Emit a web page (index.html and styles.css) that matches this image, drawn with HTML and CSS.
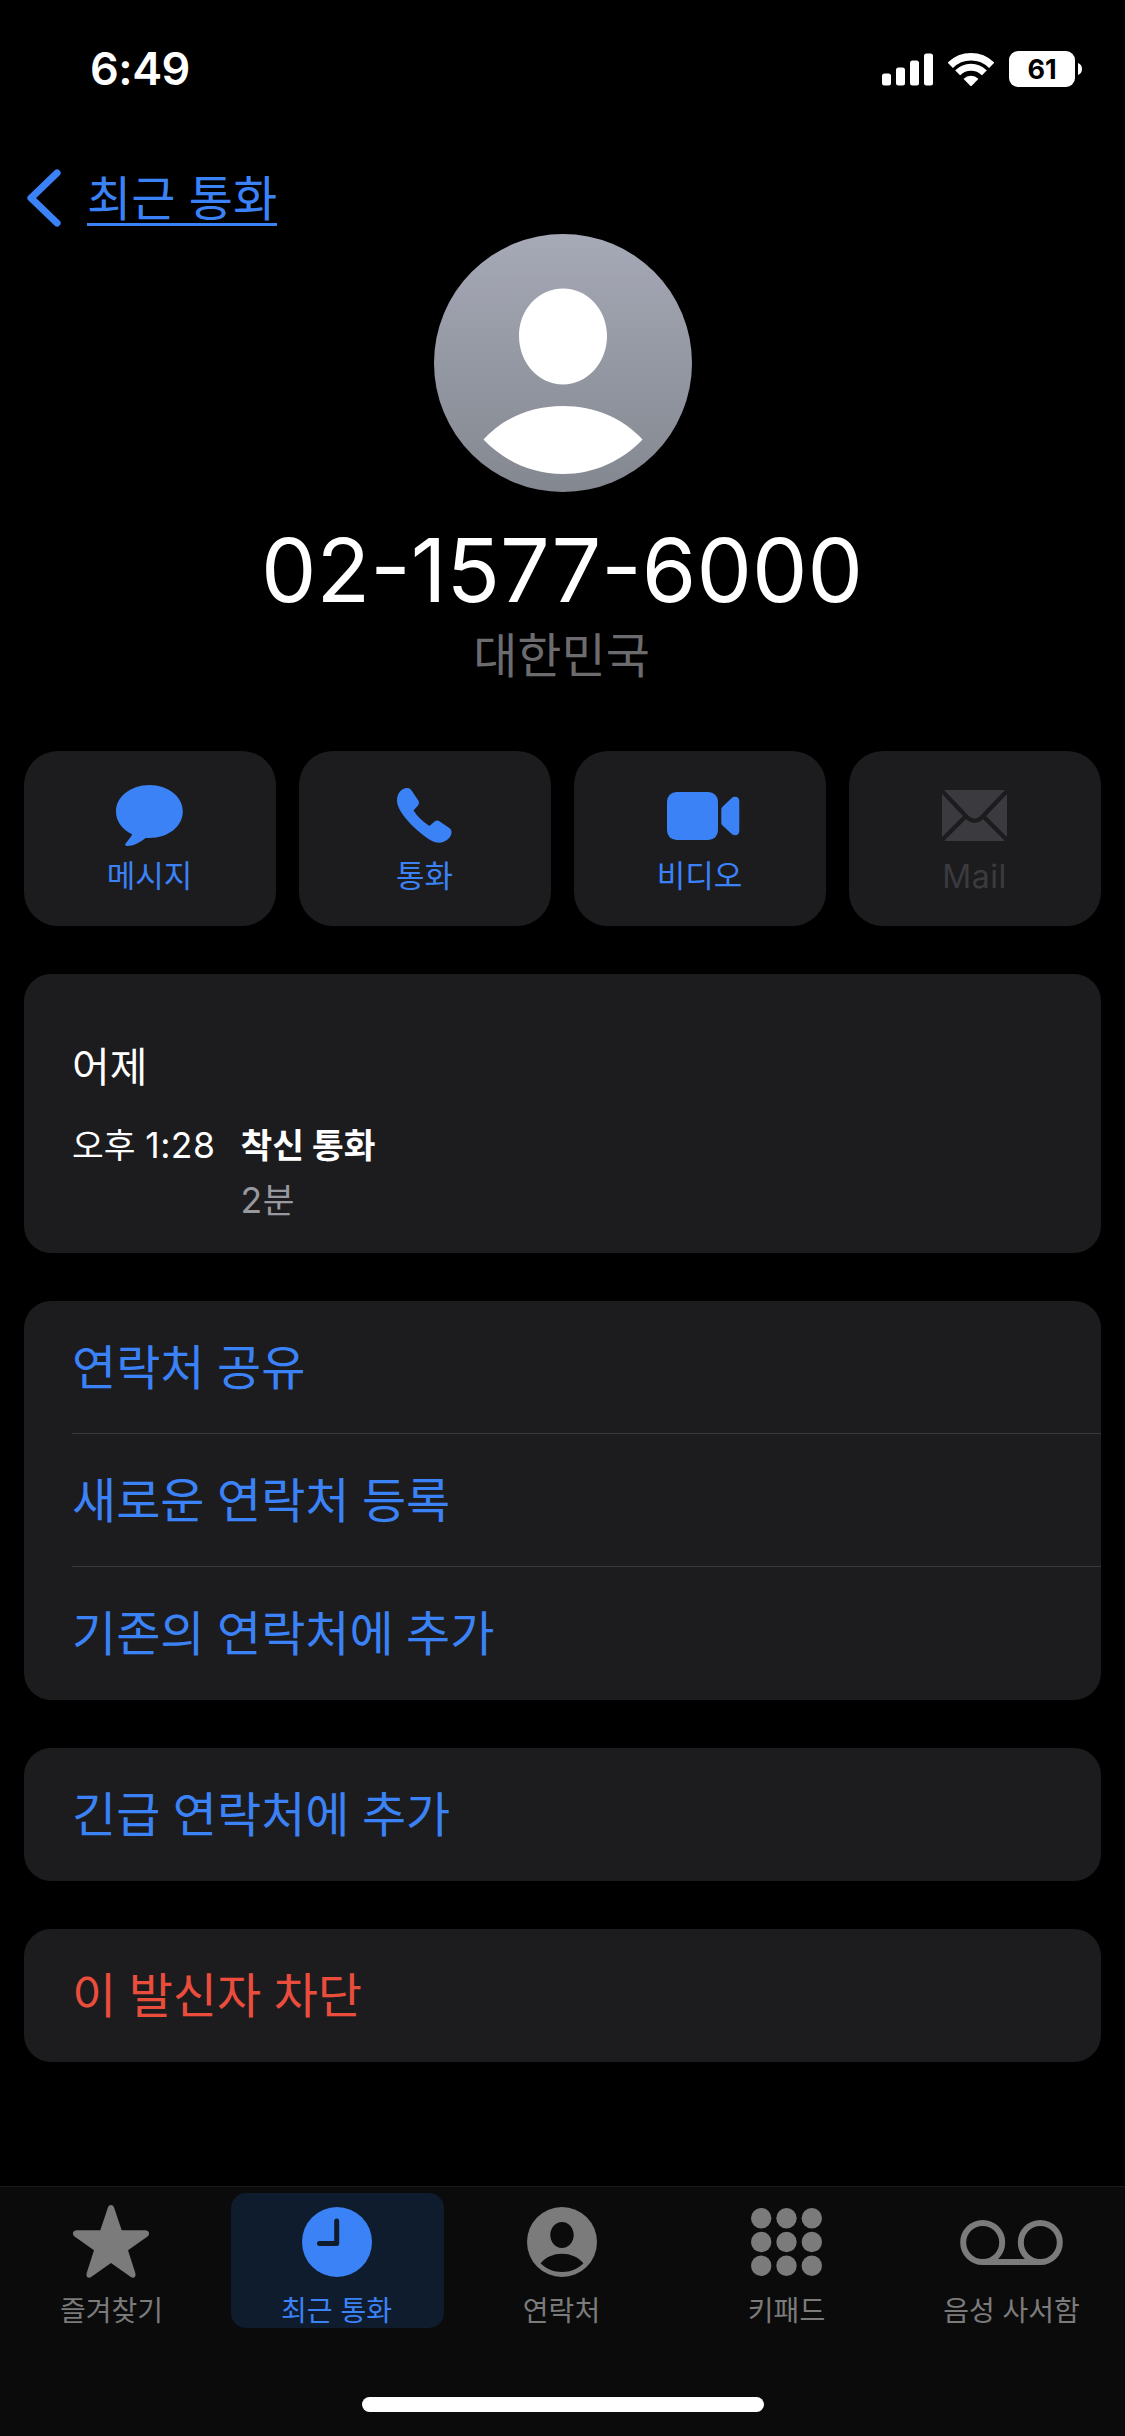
FILE: index.html
```html
<!DOCTYPE html>
<html lang="ko">
<head>
<meta charset="utf-8">
<title>최근 통화</title>
<link rel="stylesheet" href="styles.css">
</head>
<body>
<div class="screen">
  <header class="status">
    <span class="time">6:49</span>
    <div class="status-icons">
      <svg class="signal" width="52" height="33" viewBox="0 0 52 33"><rect x="0" y="20.5" width="9" height="12" rx="2.5"/><rect x="14" y="14.5" width="9" height="18" rx="2.5"/><rect x="28" y="7.5" width="9" height="25" rx="2.5"/><rect x="42" y="0.5" width="9" height="32" rx="2.5"/></svg>
      <svg class="wifi" width="46" height="33" viewBox="0 0 46 33"><defs><clipPath id="fan"><path d="M23 33.5L-1 9L9 -3H37L47 9Z"/></clipPath></defs><g clip-path="url(#fan)"><circle cx="23" cy="33" r="29.3" fill="none" stroke="#fff" stroke-width="7.4"/><circle cx="23" cy="33" r="18.7" fill="none" stroke="#fff" stroke-width="7"/><circle cx="23" cy="33" r="10.3" fill="#fff"/></g></svg>
      <div class="battery"><span class="level">61</span><svg class="nub" width="4" height="12" viewBox="0 0 4 12"><path d="M0 0Q4 1.5 4 6T0 12Z"/></svg></div>
    </div>
  </header>

  <nav class="back">
    <svg width="34" height="58" viewBox="0 0 34 58"><path d="M30 4L4 29L30 54" fill="none" stroke="currentColor" stroke-width="7.2" stroke-linecap="round" stroke-linejoin="round"/></svg>
    <a class="back-label">최근 통화</a>
  </nav>

  <section class="profile">
    <svg class="avatar" width="258" height="258" viewBox="0 0 258 258"><defs><linearGradient id="shade" x1="0" y1="0" x2="0" y2="1"><stop offset="0" stop-color="#a6a9b6"/><stop offset="1" stop-color="#838890"/></linearGradient></defs><circle cx="129" cy="129" r="129" fill="url(#shade)"/><path fill="#fff" d="M129 54.5C154 54.5 173 76 173 102C173 129 153 150.5 129 150.5S85 129 85 102C85 76 104 54.5 129 54.5ZM49.500 205.500C69 184 97 172 129 172S189 184 208.500 205.500C188 227 160 240 129 240S70 227 49.500 205.500Z"/></svg>
    <h1 class="number">02-1577-6000</h1>
    <p class="country">대한민국</p>
  </section>

  <section class="actions">
    <button class="action"><span class="glyph"><svg width="67" height="61" viewBox="0 0 67 61"><path d="M33.400 0C52 0 66.800 11.500 66.800 26.500S52 53 33.400 53H29.500C24 57.500 17 61 11.500 61C9.200 61 8.600 59.800 9.800 58.300C12.500 55 15 52.200 16.200 49.300C6.500 45 0 36.500 0 26.500C0 11.500 15 0 33.400 0Z"/></svg></span><span class="action-label">메시지</span></button>
    <button class="action"><span class="glyph"><svg width="55" height="55" viewBox="0 0 55 55"><path d="M9.700 0C11.700 0 13.300 .6 14.400 2.300L21.300 12.500C22.300 14.200 22.200 15.800 21.200 17.200L17.300 21.400C16.600 22.200 16.600 22.800 17.200 23.600C20.500 28.500 25.500 33.500 31 37.100C31.900 37.800 32.700 37.800 33.400 37.200L37.600 33.500C39 32.400 40.800 32.300 42.400 33.300L52 39.700C54 41.200 54.700 42.600 54.500 44.600C54.200 50 48.500 54.700 42 54.700C37 54.700 32 51.700 27 47.700C18 41 9 32 3.600 23.300C1.200 19.200 0 16 0 12.300C0 5 5 0 9.700 0Z"/></svg></span><span class="action-label">통화</span></button>
    <button class="action"><span class="glyph video"><svg width="73" height="48" viewBox="0 0 73 48"><rect width="51" height="48" rx="9.500"/><path d="M54.300 17.500Q54.300 15.800 55.500 14.700L64.500 6.200C67.500 3.500 72.300 4.500 72.300 9V39C72.300 43.500 67.500 44.500 64.500 41.800L55.500 33.500Q54.300 32.400 54.300 30.700Z"/></svg></span><span class="action-label">비디오</span></button>
    <button class="action off"><span class="glyph"><svg width="65" height="51" viewBox="0 0 65 51"><rect width="65" height="51" rx="4"/><path d="M0 1L26 28.200Q32.500 33.600 39 28.200L65 1M0 50L23.500 26.500M65 50L41.500 26.500" fill="none" stroke="#1c1c1e" stroke-width="4.300"/></svg></span><span class="action-label mail">Mail</span></button>
  </section>

  <section class="card history">
    <h2 class="day">어제</h2>
    <div class="call"><span class="when">오후 <span class="clock">1:28</span></span><div class="detail"><b class="kind">착신 통화</b><span class="length"><span class="clock">2</span>분</span></div></div>
  </section>

  <section class="card">
    <a class="row">연락처 공유</a>
    <a class="row">새로운 연락처 등록</a>
    <a class="row">기존의 연락처에 추가</a>
  </section>
  <section class="card"><a class="row">긴급 연락처에 추가</a></section>
  <section class="card"><a class="row danger">이 발신자 차단</a></section>

  <footer class="dock">
    <nav class="tabs">
      <a class="tab"><span class="tab-icon star"><svg width="76" height="73" viewBox="0 0 76 73"><path d="M34.600 3.500C35.600-1.100 40.400-1.100 41.400 3.500L48.700 25.300H72C76 25.300 77.500 29 74.500 31.500L55 45.300L62.300 68C63.300 72 60.700 74 57.500 71.700L38 58L18.500 71.700C15.300 74 12.700 72 13.700 68L21 45.300L1.500 31.500C-1.500 29 0 25.300 4 25.300H27.300Z"/></svg></span><span class="tab-label">즐겨찾기</span></a>
      <a class="tab active"><span class="tab-icon"><svg width="70" height="70" viewBox="0 0 70 70"><circle cx="35" cy="35" r="35"/><path d="M34.700 14V36.500H17.500" fill="none" stroke="#0f1c2d" stroke-width="5" stroke-linecap="round" stroke-linejoin="round"/></svg></span><span class="tab-label">최근 통화</span></a>
      <a class="tab"><span class="tab-icon"><svg width="70" height="70" viewBox="0 0 70 70"><path fill-rule="evenodd" d="M35 0A35 35 0 1 1 35 70A35 35 0 1 1 35 0ZM35 15C28.500 15 23.300 20.800 23.300 28S28.500 41 35 41S46.700 35.200 46.700 28S41.500 15 35 15ZM13.600 56.300C19 62 26.500 65 35 65S51 62 56.400 56.300C51.500 50 43.500 46.700 35 46.700S18.500 50 13.600 56.300Z"/></svg></span><span class="tab-label">연락처</span></a>
      <a class="tab"><span class="tab-icon"><svg width="71" height="68" viewBox="0 0 71 68"><circle cx="10.200" cy="10.200" r="10.200"/><circle cx="35.500" cy="10.200" r="10.200"/><circle cx="60.800" cy="10.200" r="10.200"/><circle cx="10.200" cy="34" r="10.200"/><circle cx="35.500" cy="34" r="10.200"/><circle cx="60.800" cy="34" r="10.200"/><circle cx="10.200" cy="57.800" r="10.200"/><circle cx="35.500" cy="57.800" r="10.200"/><circle cx="60.800" cy="57.800" r="10.200"/></svg></span><span class="tab-label">키패드</span></a>
      <a class="tab"><span class="tab-icon"><svg width="103" height="45" viewBox="0 0 103 45"><g fill="none" stroke="currentColor" stroke-width="6"><circle cx="22.700" cy="22.500" r="19.500"/><circle cx="80.300" cy="22.500" r="19.500"/><path d="M22.700 42H80.300"/></g></svg></span><span class="tab-label">음성 사서함</span></a>
    </nav>
    <div class="home"></div>
  </footer>
</div>
</body>
</html>
```
FILE: styles.css
```css
* { box-sizing: border-box; margin: 0; padding: 0; }

body {
  background: #000;
  color: #fff;
  font-family: Inter, "Noto Sans CJK KR", sans-serif;
}

svg { display: block; flex: none; fill: currentColor; }

.screen {
  width: 1125px;
  height: 2436px;
  display: flex;
  flex-direction: column;
  overflow: hidden;
}

.status {
  height: 138px;
  flex: none;
  display: flex;
  justify-content: space-between;
  align-items: center;
  padding: 0 43px 0 90px;
}
.time { font-size: 45px; font-weight: 600; line-height: 54px; letter-spacing: -.5px; }
.status-icons { display: flex; align-items: center; }
.wifi { margin-left: 14px; }
.battery { display: flex; align-items: center; gap: 3px; margin-left: 15px; }
.level {
  width: 66px;
  height: 36px;
  border-radius: 9px;
  background: #fff;
  color: #000;
  font-size: 27px;
  font-weight: 700;
  line-height: 37px;
  text-align: center;
}

.back {
  height: 96px;
  flex: none;
  display: flex;
  align-items: center;
  gap: 26px;
  padding: 28px 0 0 27px;
  color: #3b82f7;
}
.back svg { margin-top: -4px; }
.back-label {
  font-size: 48px;
  line-height: 53px;
  height: 54px;
  margin-top: -2px;
  border-bottom: 3px solid #3b82f7;
}

.profile { display: flex; flex-direction: column; align-items: center; height: 517px; flex: none; }
.number { font-size: 88px; font-weight: 400; line-height: 106px; margin-top: 25px; padding-right: 1px; }
.country { font-size: 48px; line-height: 58px; margin-top: 4px; padding-right: 2px; color: #6c6c6e; }

.actions { display: grid; grid-template-columns: repeat(4, 1fr); gap: 23px; padding: 0 24px; }
.action {
  height: 175px;
  border: 0;
  border-radius: 34px;
  background: #1c1c1e;
  color: #3b82f7;
  font-family: inherit;
  display: flex;
  flex-direction: column;
  align-items: center;
  justify-content: flex-start;
}
.glyph { height: 61px; margin-top: 34px; padding-right: 2px; display: flex; align-items: center; }
.video { padding: 0 0 0 6px; }
.action-label { font-size: 31px; line-height: 40px; margin-top: 10px; padding-right: 1px; }
.off { color: #3b3b3f; }
.mail { font-size: 32px; line-height: 42px; letter-spacing: .5px; }

.card { margin: 48px 24px 0; border-radius: 27px; background: #1c1c1e; flex: none; overflow: hidden; }
.history { height: 279px; padding: 68px 48px 0; }
.day { font-size: 41px; font-weight: 400; line-height: 50px; }
.call { display: flex; gap: 25px; margin-top: 32px; font-size: 34.500px; line-height: 44px; }
.detail { display: flex; flex-direction: column; gap: 11px; }
.length { color: #98989f; }
.clock { font-size: 35.500px; letter-spacing: .5px; }

.row {
  display: flex;
  align-items: center;
  height: 133px;
  margin-left: 48px;
  font-size: 48px;
  line-height: 58px;
  word-spacing: -1px;
  color: #3b82f7;
}
.row:not(:last-child) { border-bottom: 1px solid #3a3a3d; padding-top: 1px; }
.danger { color: #eb4d3d; }

.dock {
  margin-top: auto;
  height: 250px;
  flex: none;
  background: #0b0b0b;
  border-top: 1px solid #191919;
  display: flex;
  flex-direction: column;
  align-items: center;
}
.tabs { display: grid; grid-template-columns: repeat(5, 1fr); width: 1125px; padding-top: 6px; }
.tab {
  height: 135px;
  margin: 0 6px;
  padding-right: 2px;
  display: flex;
  flex-direction: column;
  align-items: center;
  color: #7b7b7b;
  border-radius: 15px;
}
.tab-icon { height: 75px; margin-top: 12px; display: flex; align-items: center; }
.star { align-items: flex-start; padding-right: 1px; }
.tab-label { font-size: 28px; line-height: 34px; margin-top: 15px; white-space: nowrap; }
.active { background: #0f1c2d; color: #3b82f7; }
.home { width: 402px; height: 15px; border-radius: 8px; background: #fff; margin-top: 69px; }
```
